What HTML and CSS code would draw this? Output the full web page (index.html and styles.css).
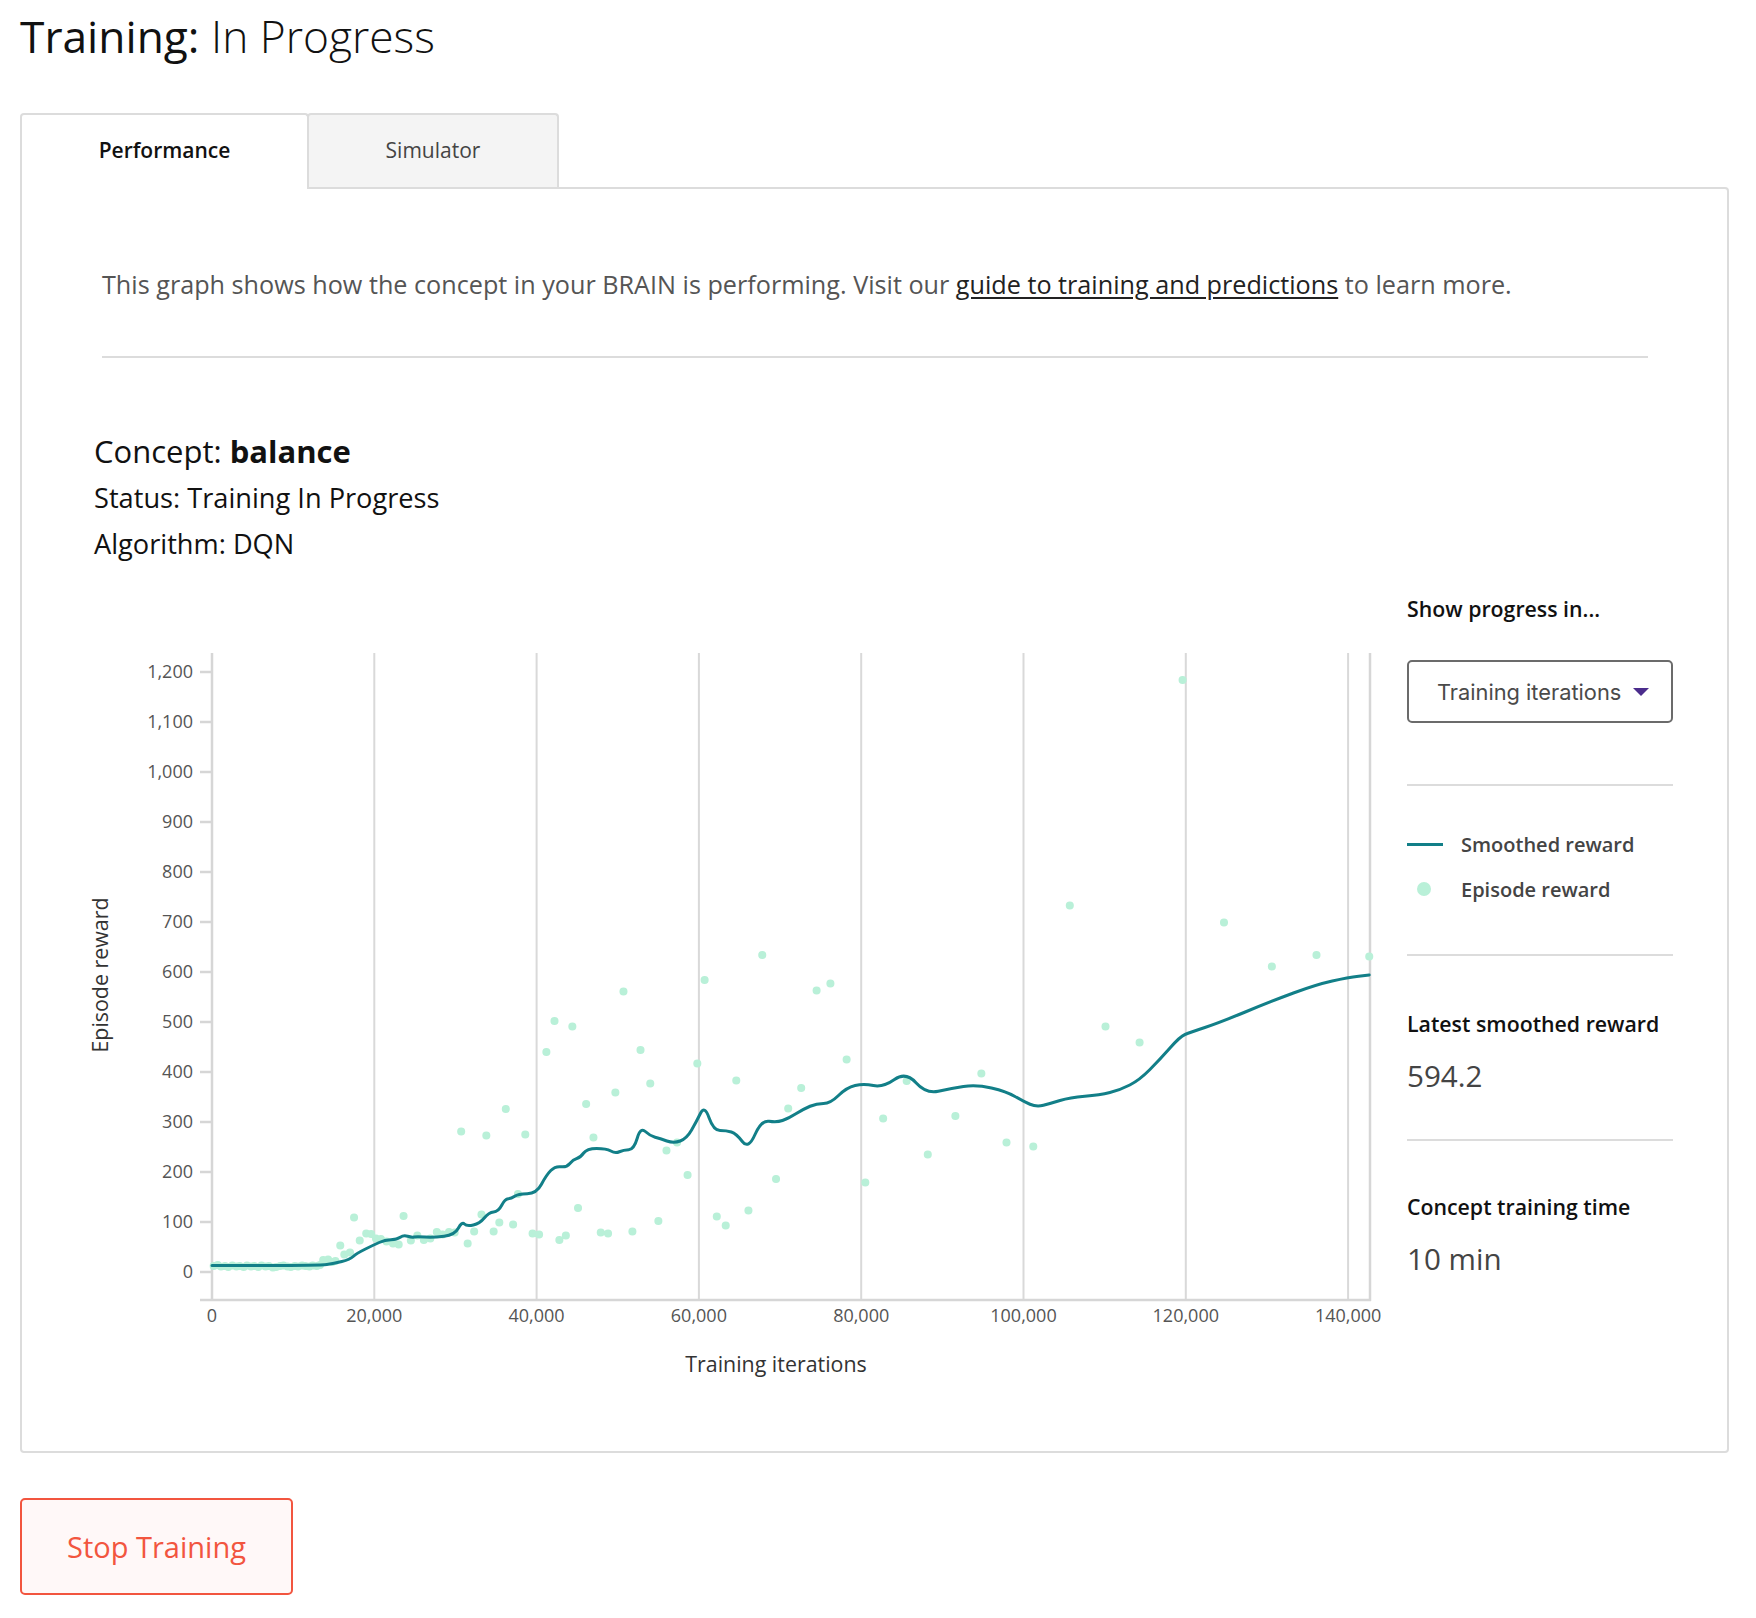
FILE: index.html
```html
<!DOCTYPE html>
<html lang="en">
<head>
<meta charset="utf-8">
<title>Training: In Progress</title>
<link rel="stylesheet" href="styles.css">
</head>
<body>
<h1 class="title"><span>Training:</span> <span class="title-light">In Progress</span></h1>
<div class="tabs">
  <div class="tab tab-active">Performance</div>
  <div class="tab tab-inactive">Simulator</div>
</div>
<section class="panel">
  <div class="intro">
    <p class="desc">This graph shows how the concept in your BRAIN is performing. Visit our <a class="link" href="#">guide to training and predictions</a> to learn more.</p>
    <div class="rule"></div>
  </div>
  <div class="concept">
    <div class="concept-name">Concept: <b>balance</b></div>
    <div class="concept-meta">Status: Training In Progress</div>
    <div class="concept-meta">Algorithm: DQN</div>
  </div>
  <div class="main">
    <svg class="chart" viewBox="0 0 1310 790" width="1310" height="790">
      <g class="grid">
        <line x1="294.3" y1="63" x2="294.3" y2="710"/>
        <line x1="456.6" y1="63" x2="456.6" y2="710"/>
        <line x1="618.9" y1="63" x2="618.9" y2="710"/>
        <line x1="781.2" y1="63" x2="781.2" y2="710"/>
        <line x1="943.5" y1="63" x2="943.5" y2="710"/>
        <line x1="1105.8" y1="63" x2="1105.8" y2="710"/>
        <line x1="1268.1" y1="63" x2="1268.1" y2="710"/>
      </g>
      <g class="axis">
        <line x1="1290" y1="63" x2="1290" y2="711"/>
        <line x1="132" y1="63" x2="132" y2="711"/>
        <line x1="120" y1="710" x2="1291" y2="710"/>
        <line x1="120" y1="682" x2="132" y2="682"/>
        <line x1="120" y1="632" x2="132" y2="632"/>
        <line x1="120" y1="582" x2="132" y2="582"/>
        <line x1="120" y1="532" x2="132" y2="532"/>
        <line x1="120" y1="482" x2="132" y2="482"/>
        <line x1="120" y1="432" x2="132" y2="432"/>
        <line x1="120" y1="382" x2="132" y2="382"/>
        <line x1="120" y1="332" x2="132" y2="332"/>
        <line x1="120" y1="282" x2="132" y2="282"/>
        <line x1="120" y1="232" x2="132" y2="232"/>
        <line x1="120" y1="182" x2="132" y2="182"/>
        <line x1="120" y1="132" x2="132" y2="132"/>
        <line x1="120" y1="82" x2="132" y2="82"/>
      </g>
      <g class="tick-y">
        <text x="113" y="688">0</text>
        <text x="113" y="638">100</text>
        <text x="113" y="588">200</text>
        <text x="113" y="538">300</text>
        <text x="113" y="488">400</text>
        <text x="113" y="438">500</text>
        <text x="113" y="388">600</text>
        <text x="113" y="338">700</text>
        <text x="113" y="288">800</text>
        <text x="113" y="238">900</text>
        <text x="113" y="188">1,000</text>
        <text x="113" y="138">1,100</text>
        <text x="113" y="88">1,200</text>
      </g>
      <g class="tick-x">
        <text x="132" y="732">0</text>
        <text x="294.3" y="732">20,000</text>
        <text x="456.6" y="732">40,000</text>
        <text x="618.9" y="732">60,000</text>
        <text x="781.2" y="732">80,000</text>
        <text x="943.5" y="732">100,000</text>
        <text x="1105.8" y="732">120,000</text>
        <text x="1268.1" y="732">140,000</text>
      </g>
      <text class="axis-title" x="696" y="782">Training iterations</text>
      <text class="axis-title" transform="translate(28 385) rotate(-90)">Episode reward</text>
      <g transform="translate(132 682) scale(8.115 -0.5)">
        <path class="dots" vector-effect="non-scaling-stroke" d="M0.2 12h0.01M0.7 14h0.01M1.1 11h0.01M1.6 12h0.01M2 10h0.01M2.5 13h0.01M3 11h0.01M3.4 12h0.01M3.9 10h0.01M4.3 13h0.01M4.8 11h0.01M5.2 12h0.01M5.7 10h0.01M6.1 13h0.01M6.6 11h0.01M7 12h0.01M7.5 9h0.01M7.9 10h0.01M8.4 12h0.01M8.8 13h0.01M9.3 11h0.01M9.7 10h0.01M10.2 12h0.01M10.6 11h0.01M11.1 13h0.01M11.5 12h0.01M12 11h0.01M12.4 13h0.01M12.9 12h0.01M13.3 14h0.01M13.7 24h0.01M14.3 25h0.01M14.8 20h0.01M15.2 22h0.01M15.8 53h0.01M16.3 35h0.01M17 39h0.01M17.5 109h0.01M18.2 63h0.01M19 77h0.01M19.6 76h0.01M20.2 67h0.01M20.8 66h0.01M21.5 61h0.01M22.3 57h0.01M23 55h0.01M23.6 112h0.01M24.5 63h0.01M25.3 73h0.01M26.1 64h0.01M26.9 67h0.01M27.7 80h0.01M28.4 75h0.01M29.2 80h0.01M29.9 79h0.01M30.7 281h0.01M31.5 57h0.01M32.3 81h0.01M33.2 115h0.01M33.8 273h0.01M34.7 81h0.01M35.4 99h0.01M36.2 326h0.01M37.1 95h0.01M37.7 156h0.01M38.6 275h0.01M39.5 77h0.01M40.3 75h0.01M41.2 440h0.01M42.2 502h0.01M42.8 64h0.01M43.6 73h0.01M44.4 491h0.01M45.1 128h0.01M46.1 336h0.01M47 269h0.01M47.9 79h0.01M48.8 77h0.01M49.7 359h0.01M50.7 561h0.01M51.8 81h0.01M52.8 444h0.01M54 377h0.01M55 102h0.01M56 243h0.01M57.3 259h0.01M58.6 194h0.01M59.8 417h0.01M60.7 584h0.01M62.2 111h0.01M63.3 93h0.01M64.6 383h0.01M66.1 123h0.01M67.8 634h0.01M69.5 186h0.01M71 327h0.01M72.6 368h0.01M74.5 563h0.01M76.2 577h0.01M78.2 425h0.01M80.5 179h0.01M82.7 307h0.01M85.6 382h0.01M88.2 235h0.01M91.6 312h0.01M94.8 397h0.01M97.9 259h0.01M101.2 251h0.01M105.7 733h0.01M110.1 491h0.01M114.3 459h0.01M119.6 1184h0.01M124.7 699h0.01M130.6 611h0.01M136.1 634h0.01M142.6 631h0.01"/>
        <path class="smooth" vector-effect="non-scaling-stroke" d="M0 13L6.65 13Q13.3 13 14.15 15Q15 17 16 21Q17 25 17.4 31Q17.8 37 18.85 45.5Q19.9 54 20.6 59Q21.3 64 22.05 64.5Q22.8 65 23.2 69.5Q23.6 74 24.1 71.5Q24.6 69 24.9 70Q25.2 71 26.25 70Q27.3 69 28.6 71.5Q29.9 74 30.35 87.5Q30.8 101 31.1 96Q31.4 91 32.2 94Q33 97 33.55 108Q34.1 119 34.7 120Q35.3 121 35.7 133.5Q36.1 146 36.5 146.5Q36.9 147 37.3 151.5Q37.7 156 38.85 156.5Q40 157 40.6 175.5Q41.2 194 41.75 203Q42.3 212 43 210.5Q43.7 209 44.1 217Q44.5 225 44.95 227Q45.4 229 45.8 238Q46.2 247 47.4 247Q48.6 247 49.15 242Q49.7 237 50.2 240.5Q50.7 244 51.35 244.5Q52 245 52.4 267.5Q52.8 290 53.4 281Q54 272 54.6 269.5Q55.2 267 56.05 262Q56.9 257 57.7 262Q58.5 267 59.1 284Q59.7 301 60.2 317.5Q60.7 334 61.25 308.5Q61.8 283 62.6 283Q63.4 283 64 280Q64.6 277 65.35 261Q66.1 245 66.9 274.5Q67.7 304 68.65 301.5Q69.6 299 70.3 303Q71 307 71.95 316.5Q72.9 326 73.7 331.5Q74.5 337 75.35 337Q76.2 337 77.2 353Q78.2 369 79.25 373Q80.3 377 81.5 373Q82.7 369 84.1 385Q85.5 401 86.75 378.5Q88 356 89.5 361.5Q91 367 92.6 371Q94.2 375 96.05 368Q97.9 361 98.95 351Q100 341 100.8 335.5Q101.6 330 102.45 333.5Q103.3 337 104.5 343Q105.7 349 107.55 351.5Q109.4 354 110.65 359Q111.9 364 113.1 374Q114.3 384 115.55 404.5Q116.8 425 118.05 448Q119.3 471 119.9 475Q120.5 479 122.35 489Q124.2 499 127.4 520.5Q130.6 542 133.35 558.5Q136.1 575 138.05 582Q140 589 141.3 591.5L142.6 594"/>
      </g>
    </svg>
    <aside class="sidebar">
      <div class="side-heading">Show progress in...</div>
      <div class="select">
        <span>Training iterations</span>
        <svg class="caret" width="16" height="8" viewBox="0 0 16 8"><path d="M0 0H16L8 8Z"/></svg>
      </div>
      <div class="side-rule rule-a"></div>
      <div class="legend">
        <div class="legend-item"><span class="legend-line"></span>Smoothed reward</div>
        <div class="legend-item"><span class="legend-dot"></span>Episode reward</div>
      </div>
      <div class="side-rule rule-b"></div>
      <div class="stat-label">Latest smoothed reward</div>
      <div class="stat-value">594.2</div>
      <div class="side-rule rule-c"></div>
      <div class="stat-label stat-label-2">Concept training time</div>
      <div class="stat-value">10 min</div>
    </aside>
  </div>
</section>
<button class="stop" type="button">Stop Training</button>
</body>
</html>
```
FILE: styles.css
```css
body {
  margin: 0;
  padding: 0 20px 20px;
  font-family: "Open Sans", sans-serif;
  color: #111;
  background: #fff;
}

.title {
  margin: 6px 0 47px;
  font-size: 44.3px;
  line-height: 60px;
  font-weight: 400;
}

.title-light {
  font-weight: 300;
}

.tabs {
  display: flex;
  align-items: flex-end;
  height: 74px;
}

.tab {
  box-sizing: border-box;
  display: flex;
  align-items: center;
  justify-content: center;
  font-size: 21px;
  border: 2px solid #dcdcdc;
  border-bottom: 0;
  border-radius: 4px 4px 0 0;
}

.tab-active {
  width: 289px;
  height: 76px;
  margin-bottom: -2px;
  padding-bottom: 4px;
  background: #fff;
  font-weight: 600;
  color: #111;
  position: relative;
  z-index: 1;
}

.tab-inactive {
  width: 252px;
  height: 74px;
  margin-left: -2px;
  padding-bottom: 2px;
  background: #f4f4f4;
  color: #444;
}

.panel {
  box-sizing: border-box;
  width: 1709px;
  border: 2px solid #dcdcdc;
  border-radius: 0 4px 4px 4px;
  padding-bottom: 71px;
}

.intro {
  padding: 78px 79px 0 80px;
}

.desc {
  margin: 0;
  font-size: 25.2px;
  line-height: 34px;
  color: #555;
}

.link {
  color: #222;
  text-decoration: underline;
  text-underline-offset: 3px;
}

.rule {
  margin-top: 55px;
  height: 2px;
  background: #dcdcdc;
}

.concept {
  padding: 69px 0 0 72px;
}

.concept-name {
  font-size: 31px;
  line-height: 48px;
}

.concept-name b {
  font-weight: 700;
}

.concept-meta {
  font-size: 27.2px;
  line-height: 46px;
}

.main {
  display: flex;
  margin-top: 23px;
}

.chart {
  display: block;
  flex: none;
  margin-left: 58px;
  width: 1310px;
  height: 790px;
}

.grid line {
  stroke: #d9d9d9;
  stroke-width: 2;
}

.axis line {
  stroke: #d6d6d6;
  stroke-width: 2.5;
}

.tick-y text {
  font-family: "Open Sans", sans-serif;
  font-size: 18px;
  fill: #555;
  text-anchor: end;
}

.tick-x text {
  font-family: "Open Sans", sans-serif;
  font-size: 18px;
  fill: #555;
  text-anchor: middle;
}

.axis-title {
  font-family: "Open Sans", sans-serif;
  font-size: 21.4px;
  fill: #333;
  text-anchor: middle;
}

.dots {
  fill: none;
  stroke: #b9f0d8;
  stroke-width: 8;
  stroke-linecap: round;
}

.smooth {
  fill: none;
  stroke: #127f88;
  stroke-width: 3;
  stroke-linejoin: round;
  stroke-linecap: round;
}

.sidebar {
  margin-left: 17px;
  width: 266px;
  flex: none;
}

.side-heading {
  margin-top: 5px;
  font-size: 21.3px;
  line-height: 28px;
  font-weight: 600;
  color: #111;
}

.select {
  box-sizing: border-box;
  margin-top: 37px;
  height: 63px;
  border: 2px solid #6b6b6b;
  border-radius: 5px;
  display: flex;
  align-items: center;
  gap: 12px;
  padding-left: 28px;
  font-family: Inter, "Liberation Sans", sans-serif;
  font-size: 21.8px;
  color: #4a4a4a;
}

.caret {
  display: block;
  fill: #4b2c8c;
}

.side-rule {
  height: 2px;
  background: #dcdcdc;
}

.rule-a {
  margin-top: 61px;
}

.rule-b {
  margin-top: 50px;
}

.rule-c {
  margin-top: 43px;
}

.legend {
  margin-top: 43px;
}

.legend-item {
  display: flex;
  align-items: center;
  height: 30px;
  font-size: 20px;
  font-weight: 600;
  color: #444;
}

.legend-item + .legend-item {
  margin-top: 15px;
}

.legend-line {
  width: 36px;
  height: 3px;
  background: #127f88;
  margin-right: 18px;
}

.legend-dot {
  width: 14px;
  height: 14px;
  border-radius: 50%;
  background: #b9f0d8;
  margin-left: 10px;
  margin-right: 30px;
}

.stat-label {
  margin-top: 54px;
  font-size: 21.3px;
  line-height: 28px;
  font-weight: 600;
  color: #111;
}

.stat-label-2 {
  margin-top: 52px;
}

.stat-value {
  margin-top: 18px;
  font-size: 29.6px;
  line-height: 40px;
  color: #444;
}

.stop {
  display: block;
  margin-top: 45px;
  width: 273px;
  height: 97px;
  border: 2px solid #f2553f;
  border-radius: 5px;
  background: #fff8f8;
  color: #f2553f;
  font-family: "Open Sans", sans-serif;
  font-size: 29px;
  padding: 0;
}
```
